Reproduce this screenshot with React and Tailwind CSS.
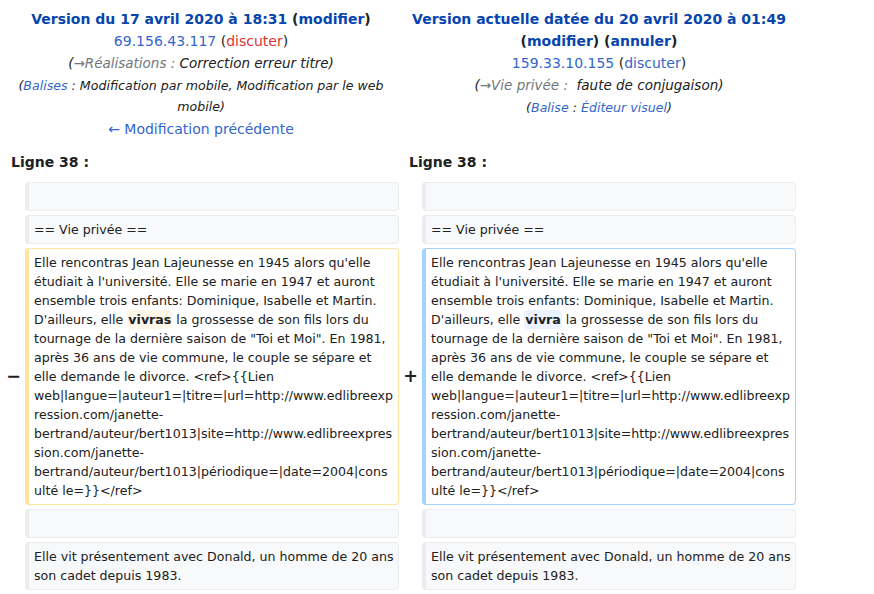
import React from 'react';

const link = 'text-[#3366cc]';
const title = 'text-[#0645ad]';

const Box = ({ kind = 'context', children }) => {
  const styles = {
    context: 'border-[#eaecf0] bg-[#f8f9fa]',
    deleted: 'border-[#ffe49c] bg-white',
    added: 'border-[#a3d3ff] bg-white',
  };
  return (
    <div className={`w-[374px] rounded-[4px] border border-l-4 pl-[5px] pr-1 py-1 text-[12.6px] leading-[19px] break-words ${styles[kind]}`}>
      {children}
    </div>
  );
};

const Marker = ({ children }) => (
  <div className="w-[23px] flex items-center justify-end pr-1 text-[17.5px] font-bold leading-none">{children}</div>
);

const Change = ({ color, children }) => (
  <span className={`font-bold rounded-[4px] py-[2px] px-[1px] ${color}`}>{children}</span>
);

const bigText = (word, color) => (
  <>
    Elle rencontras Jean Lajeunesse en 1945 alors qu'elle étudiait à l'université. Elle se marie en 1947 et auront ensemble trois enfants: Dominique, Isabelle et Martin. D'ailleurs, elle <Change color={color}>{word}</Change> la grossesse de son fils lors du tournage de la dernière saison de "Toi et Moi". En 1981, après 36 ans de vie commune, le couple se sépare et elle demande le divorce. &lt;ref&gt;{'{{'}Lien web|langue=|auteur1=|titre=|url=http://www.edlibreexpression.com/janette-bertrand/auteur/bert1013|site=http://www.edlibreexpression.com/janette-bertrand/auteur/bert1013|périodique=|date=2004|consulté le={'}}'}&lt;/ref&gt;
  </>
);

const Row = ({ left, right, lm, rm, lk = 'context', rk = 'context' }) => (
  <div className="flex">
    <Marker>{lm}</Marker>
    <Box kind={lk}>{left}</Box>
    <Marker>{rm}</Marker>
    <Box kind={rk}>{right}</Box>
  </div>
);

export default function App() {
  return (
    <div className="w-[874px] h-[594px] bg-white text-[#202122] font-['DejaVu_Sans',sans-serif] overflow-hidden">
      <div className="ml-[2px] w-[796px]">
        <div className="grid grid-cols-2 pt-[8px] text-center text-[14px] leading-[22px]">
          <div className="px-2">
            <div className="font-bold">
              <span className={title}>Version du 17 avril 2020 à 18:31</span> (<span className={title}>modifier</span>)
            </div>
            <div>
              <span className={link}>69.156.43.117</span> (<span className="text-[#d33]">discuter</span>)
            </div>
            <div className="italic text-[13.5px]">
              (<span className="text-[#72777d]">→Réalisations :</span> Correction erreur titre)
            </div>
            <div className="italic text-[12.6px] leading-[21px] py-[1px]">
              (<span className={link}>Balises</span> : Modification par mobile, Modification par le web mobile)
            </div>
            <div>
              <span className={link}>← Modification précédente</span>
            </div>
          </div>
          <div className="px-2">
            <div className="font-bold">
              <span className={title}>Version actuelle datée du 20 avril 2020 à 01:49</span> (<span className={title}>modifier</span>) (<span className={title}>annuler</span>)
            </div>
            <div>
              <span className={link}>159.33.10.155</span> (<span className={link}>discuter</span>)
            </div>
            <div className="italic text-[13.5px]">
              (<span className="text-[#72777d]">→Vie privée :</span>&nbsp; faute de conjugaison)
            </div>
            <div className="italic text-[12.6px] leading-[21px] py-[1px]">
              (<span className={link}>Balise</span> : <span className={link}>Éditeur visuel</span>)
            </div>
          </div>
        </div>

        <div className="grid grid-cols-2 mt-[11px] text-[14px] leading-[22px] font-bold">
          <div className="pl-[9px]">Ligne 38 :</div>
          <div className="pl-[9px]">Ligne 38 :</div>
        </div>

        <div className="mt-[9px] flex flex-col gap-1">
          <Row left={'\u00a0'} right={'\u00a0'} />
          <Row left="== Vie privée ==" right="== Vie privée ==" />
          <Row
            lm="−"
            rm="+"
            lk="deleted"
            rk="added"
            left={bigText('vivras', 'bg-[#fef6e7]')}
            right={bigText('vivra', 'bg-[#eaf3ff]')}
          />
          <Row left={'\u00a0'} right={'\u00a0'} />
          <Row
            left="Elle vit présentement avec Donald, un homme de 20 ans son cadet depuis 1983."
            right="Elle vit présentement avec Donald, un homme de 20 ans son cadet depuis 1983."
          />
        </div>
      </div>
    </div>
  );
}
